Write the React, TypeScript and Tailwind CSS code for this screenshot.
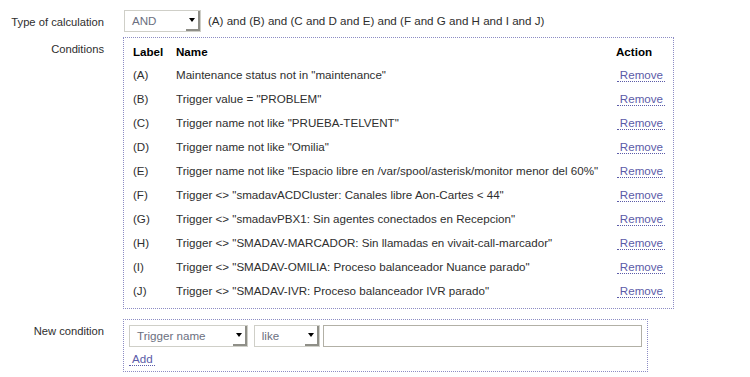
import React from "react";

const conditions: [string, string][] = [
  ["(A)", 'Maintenance status not in "maintenance"'],
  ["(B)", 'Trigger value = "PROBLEM"'],
  ["(C)", 'Trigger name not like "PRUEBA-TELVENT"'],
  ["(D)", 'Trigger name not like "Omilia"'],
  ["(E)", 'Trigger name not like "Espacio libre en /var/spool/asterisk/monitor menor del 60%"'],
  ["(F)", 'Trigger <> "smadavACDCluster: Canales libre Aon-Cartes < 44"'],
  ["(G)", 'Trigger <> "smadavPBX1: Sin agentes conectados en Recepcion"'],
  ["(H)", 'Trigger <> "SMADAV-MARCADOR: Sin llamadas en vivait-call-marcador"'],
  ["(I)", 'Trigger <> "SMADAV-OMILIA: Proceso balanceador Nuance parado"'],
  ["(J)", 'Trigger <> "SMADAV-IVR: Proceso balanceador IVR parado"'],
];

// select al estilo antiguo, con el botón de flecha en relieve
function FakeSelect({ value, width }: { value: string; width: string }) {
  return (
    <div className={`relative h-[22px] ${width} border border-[#cfcfc8] bg-white flex items-center`}>
      <span className="pl-[7px] text-[#6b6f80]">{value}</span>
      <div className="absolute right-0 top-0 h-full w-[14px] border-r-2 border-b-2 border-r-[#8f8f88] border-b-[#8f8f88] flex items-center justify-center">
        <div className="w-0 h-0 border-l-[3px] border-r-[3px] border-t-[4px] border-l-transparent border-r-transparent border-t-black" />
      </div>
    </div>
  );
}

function DottedLink({ text }: { text: string }) {
  return (
    <span className="text-[#5b5ba8] border-b border-dotted border-[#5b5ba8] pl-[3px] pr-[2px] leading-[13px] inline-block">{text}</span>
  );
}

export default function App() {
  return (
    <div className="w-[750px] h-[377px] bg-white text-[#2e2e2e] text-[11.6px] font-['Liberation_Sans',sans-serif] overflow-hidden">
      {/* Type of calculation */}
      <div className="flex pt-[10px]">
        <div className="w-[104px] text-right pt-[4px] text-[11.2px]">Type of calculation</div>
        <div className="ml-[20px] flex items-center gap-[7px]">
          <FakeSelect value="AND" width="w-[77px]" />
          <span>(A) and (B) and (C and D and E) and (F and G and H and I and J)</span>
        </div>
      </div>

      {/* Conditions */}
      <div className="flex mt-[5px]">
        <div className="w-[104px] text-right pt-[4px] text-[11.2px]">Conditions</div>
        <div className="ml-[19px] w-[551px] border border-dotted border-[#8c8cc4] pt-[3px] pb-[5px] pl-[9px] pr-[8px]">
          <table className="w-full border-collapse">
            <thead>
              <tr className="h-[22px] text-left text-black">
                <th className="w-[43px] font-bold">Label</th>
                <th className="font-bold">Name</th>
                <th className="w-[50px] font-bold pl-[1px]">Action</th>
              </tr>
            </thead>
            <tbody>
              {conditions.map(([label, name]) => (
                <tr key={label} className="h-[24px]">
                  <td>{label}</td>
                  <td>{name}</td>
                  <td className="text-right">
                    <DottedLink text="Remove" />
                  </td>
                </tr>
              ))}
            </tbody>
          </table>
        </div>
      </div>

      {/* New condition */}
      <div className="flex mt-[10px]">
        <div className="w-[104px] text-right pt-[4px] text-[11.2px]">New condition</div>
        <div className="ml-[19px] w-[525px] border border-dotted border-[#8c8cc4] pt-[5px] pb-[4px] px-[5px]">
          <div className="flex">
            <FakeSelect value="Trigger name" width="w-[119px]" />
            <div className="ml-[6px]">
              <FakeSelect value="like" width="w-[66px]" />
            </div>
            <div className="ml-[3px] h-[22px] w-[320px] border border-[#b2b0a6] bg-white" />
          </div>
          <div className="mt-[3px]">
            <DottedLink text="Add" />
          </div>
        </div>
      </div>
    </div>
  );
}
